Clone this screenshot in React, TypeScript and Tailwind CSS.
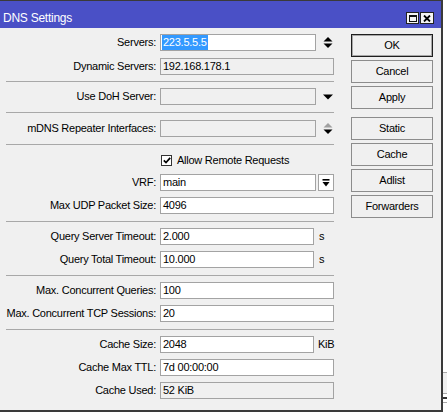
import React from 'react';

// Winbox style "DNS Settings" dialog

function UpDown({ dimTop = false }: { dimTop?: boolean }) {
  return (
    <svg width="10" height="13" viewBox="0 0 10 13">
      <polygon points="0.5,5.5 9.5,5.5 5,1" fill={dimTop ? '#a0a0a0' : '#000'} />
      <polygon points="0.5,7.5 9.5,7.5 5,12" fill="#000" />
    </svg>
  );
}

function Down() {
  return (
    <svg width="10" height="6" viewBox="0 0 10 6">
      <polygon points="0,0.5 10,0.5 5,5.5" fill="#000" />
    </svg>
  );
}

function Row({ label, children }: { label: string; children: React.ReactNode }) {
  return (
    <div className="flex h-[17px] items-center">
      <div className="w-[156px] shrink-0 whitespace-nowrap text-right">{label}</div>
      <div className="ml-[4px] flex h-full items-center">{children}</div>
    </div>
  );
}

function Field({
  value,
  width,
  ro = false,
}: {
  value?: React.ReactNode;
  width: string;
  ro?: boolean;
}) {
  return (
    <div
      className={`flex h-[17px] items-center overflow-hidden whitespace-nowrap border border-[#a3a3a3] pl-[2px] ${
        ro ? 'bg-[#f0f0f0]' : 'bg-white'
      } ${width}`}
    >
      {value}
    </div>
  );
}

function Sep({ cls }: { cls: string }) {
  return <div className={`ml-[6px] h-px w-[328px] bg-[#a8a8a8] ${cls}`} />;
}

function Btn({ label, def = false }: { label: string; def?: boolean }) {
  return (
    <div
      className={`flex h-[23px] items-center justify-center border bg-[#f0f0f0] ${
        def ? 'border-[#1e1e1e] shadow-[inset_0_0_0_1px_#a8a8a8]' : 'border-[#8c8c8c]'
      }`}
    >
      {label}
    </div>
  );
}

export default function App() {
  return (
    <div className="flex h-[416px] w-[447px] bg-white font-['Liberation_Sans',Arial,sans-serif] text-[11px] leading-[13px] tracking-[-0.25px] text-black">
      <div className="flex h-[412px] w-[443px] shrink-0 flex-col border-t border-r-2 border-b-2 border-[#3a3a3a] bg-[#f0f0f0]">
        {/* title bar */}
        <div className="flex h-[27px] shrink-0 items-start bg-[#4a50c6] pt-[10px] pl-[3px] pr-[7px]">
          <span className="text-[12px] leading-[14px] text-white">DNS Settings</span>
          <div className="ml-auto mt-px flex gap-[1px]">
            <div className="flex h-[12px] w-[13px] items-center justify-center border border-[#222] bg-[#f4f4f4]">
              <div className="h-[7px] w-[8px] border border-t-2 border-[#111]" />
            </div>
            <div className="flex h-[12px] w-[14px] items-center justify-center border border-[#222] bg-[#f4f4f4]">
              <svg width="8" height="7" viewBox="0 0 8 7">
                <path d="M1 0.5 L7 6.5 M7 0.5 L1 6.5" stroke="#000" strokeWidth="1.8" />
              </svg>
            </div>
          </div>
        </div>

        <div className="flex flex-1">
          {/* fields */}
          <div className="flex w-[336px] shrink-0 flex-col pt-[6px]">
            <Row label="Servers:">
              <Field
                width="w-[156px]"
                value={
                  <span className="-ml-[1px] flex h-[15px] items-center bg-[#3399ff] px-[1px] text-white">
                    223.5.5.5
                  </span>
                }
              />
              <div className="flex w-[18px] justify-end pr-[1px]">
                <UpDown />
              </div>
            </Row>
            <div className="mt-[7px]">
              <Row label="Dynamic Servers:">
                <Field width="w-[174px]" ro value="192.168.178.1" />
              </Row>
            </div>

            <Sep cls="mt-[6px] mb-[6px]" />
            <Row label="Use DoH Server:">
              <Field width="w-[156px]" ro />
              <div className="flex w-[18px] justify-end pr-[1px]">
                <Down />
              </div>
            </Row>

            <Sep cls="mt-[7px] mb-[7px]" />
            <Row label="mDNS Repeater Interfaces:">
              <Field width="w-[156px]" ro />
              <div className="flex w-[18px] justify-end pr-[1px]">
                <UpDown dimTop />
              </div>
            </Row>

            <Sep cls="mt-[7px] mb-[7px]" />
            <div className="flex h-[17px] items-center pl-[161px]">
              <div className="flex h-[11px] w-[11px] items-center justify-center border border-[#333] bg-white">
                <svg width="8" height="7" viewBox="0 0 8 7">
                  <path d="M0.8 3.3 L3 5.6 L7.2 0.9" stroke="#000" strokeWidth="1.7" fill="none" />
                </svg>
              </div>
              <span className="ml-[5px]">Allow Remote Requests</span>
            </div>
            <div className="mt-[5px] flex flex-col gap-[6px]">
              <Row label="VRF:">
                <Field width="w-[156px]" value="main" />
                <div className="ml-[2px] flex h-[17px] w-[16px] items-center justify-center border border-[#a3a3a3] bg-white">
                  <svg width="8" height="8" viewBox="0 0 8 8">
                    <rect x="0.5" y="0" width="7" height="1.6" fill="#000" />
                    <polygon points="0.5,3 7.5,3 4,7.5" fill="#000" />
                  </svg>
                </div>
              </Row>
              <Row label="Max UDP Packet Size:">
                <Field width="w-[174px]" value="4096" />
              </Row>
            </div>

            <Sep cls="mt-[7px] mb-[6px]" />
            <div className="flex flex-col gap-[6px]">
              <Row label="Query Server Timeout:">
                <Field width="w-[154px]" value="2.000" />
                <span className="ml-[5px]">s</span>
              </Row>
              <Row label="Query Total Timeout:">
                <Field width="w-[154px]" value="10.000" />
                <span className="ml-[5px]">s</span>
              </Row>
            </div>

            <Sep cls="mt-[7px] mb-[6px]" />
            <div className="flex flex-col gap-[6px]">
              <Row label="Max. Concurrent Queries:">
                <Field width="w-[174px]" value="100" />
              </Row>
              <Row label="Max. Concurrent TCP Sessions:">
                <Field width="w-[174px]" value="20" />
              </Row>
            </div>

            <Sep cls="mt-[7px] mb-[6px]" />
            <div className="flex flex-col gap-[6px]">
              <Row label="Cache Size:">
                <Field width="w-[154px]" value="2048" />
                <span className="ml-[4px]">KiB</span>
              </Row>
              <Row label="Cache Max TTL:">
                <Field width="w-[174px]" value="7d 00:00:00" />
              </Row>
              <Row label="Cache Used:">
                <Field width="w-[174px]" ro value="52 KiB" />
              </Row>
            </div>
          </div>

          {/* buttons */}
          <div className="ml-[15px] flex w-[82px] flex-col gap-[3px] pt-[6px]">
            <Btn label="OK" def />
            <Btn label="Cancel" />
            <Btn label="Apply" />
            <div className="mt-[5px]">
              <Btn label="Static" />
            </div>
            <Btn label="Cache" />
            <Btn label="Adlist" />
            <Btn label="Forwarders" />
          </div>
        </div>
      </div>

      {/* edge of the window behind */}
      <div className="flex flex-1 flex-col">
        <div className="h-[372px]" />
        <div className="h-px bg-[#a8a8a8]" />
        <div className="h-[20px] bg-[#f0f0f0]" />
        <div className="h-px bg-[#a8a8a8]" />
        <div className="h-[3px]" />
        <div className="h-[2px] bg-[#333]" />
        <div className="h-[3px]" />
        <div className="h-px bg-[#a8a8a8]" />
      </div>
    </div>
  );
}
